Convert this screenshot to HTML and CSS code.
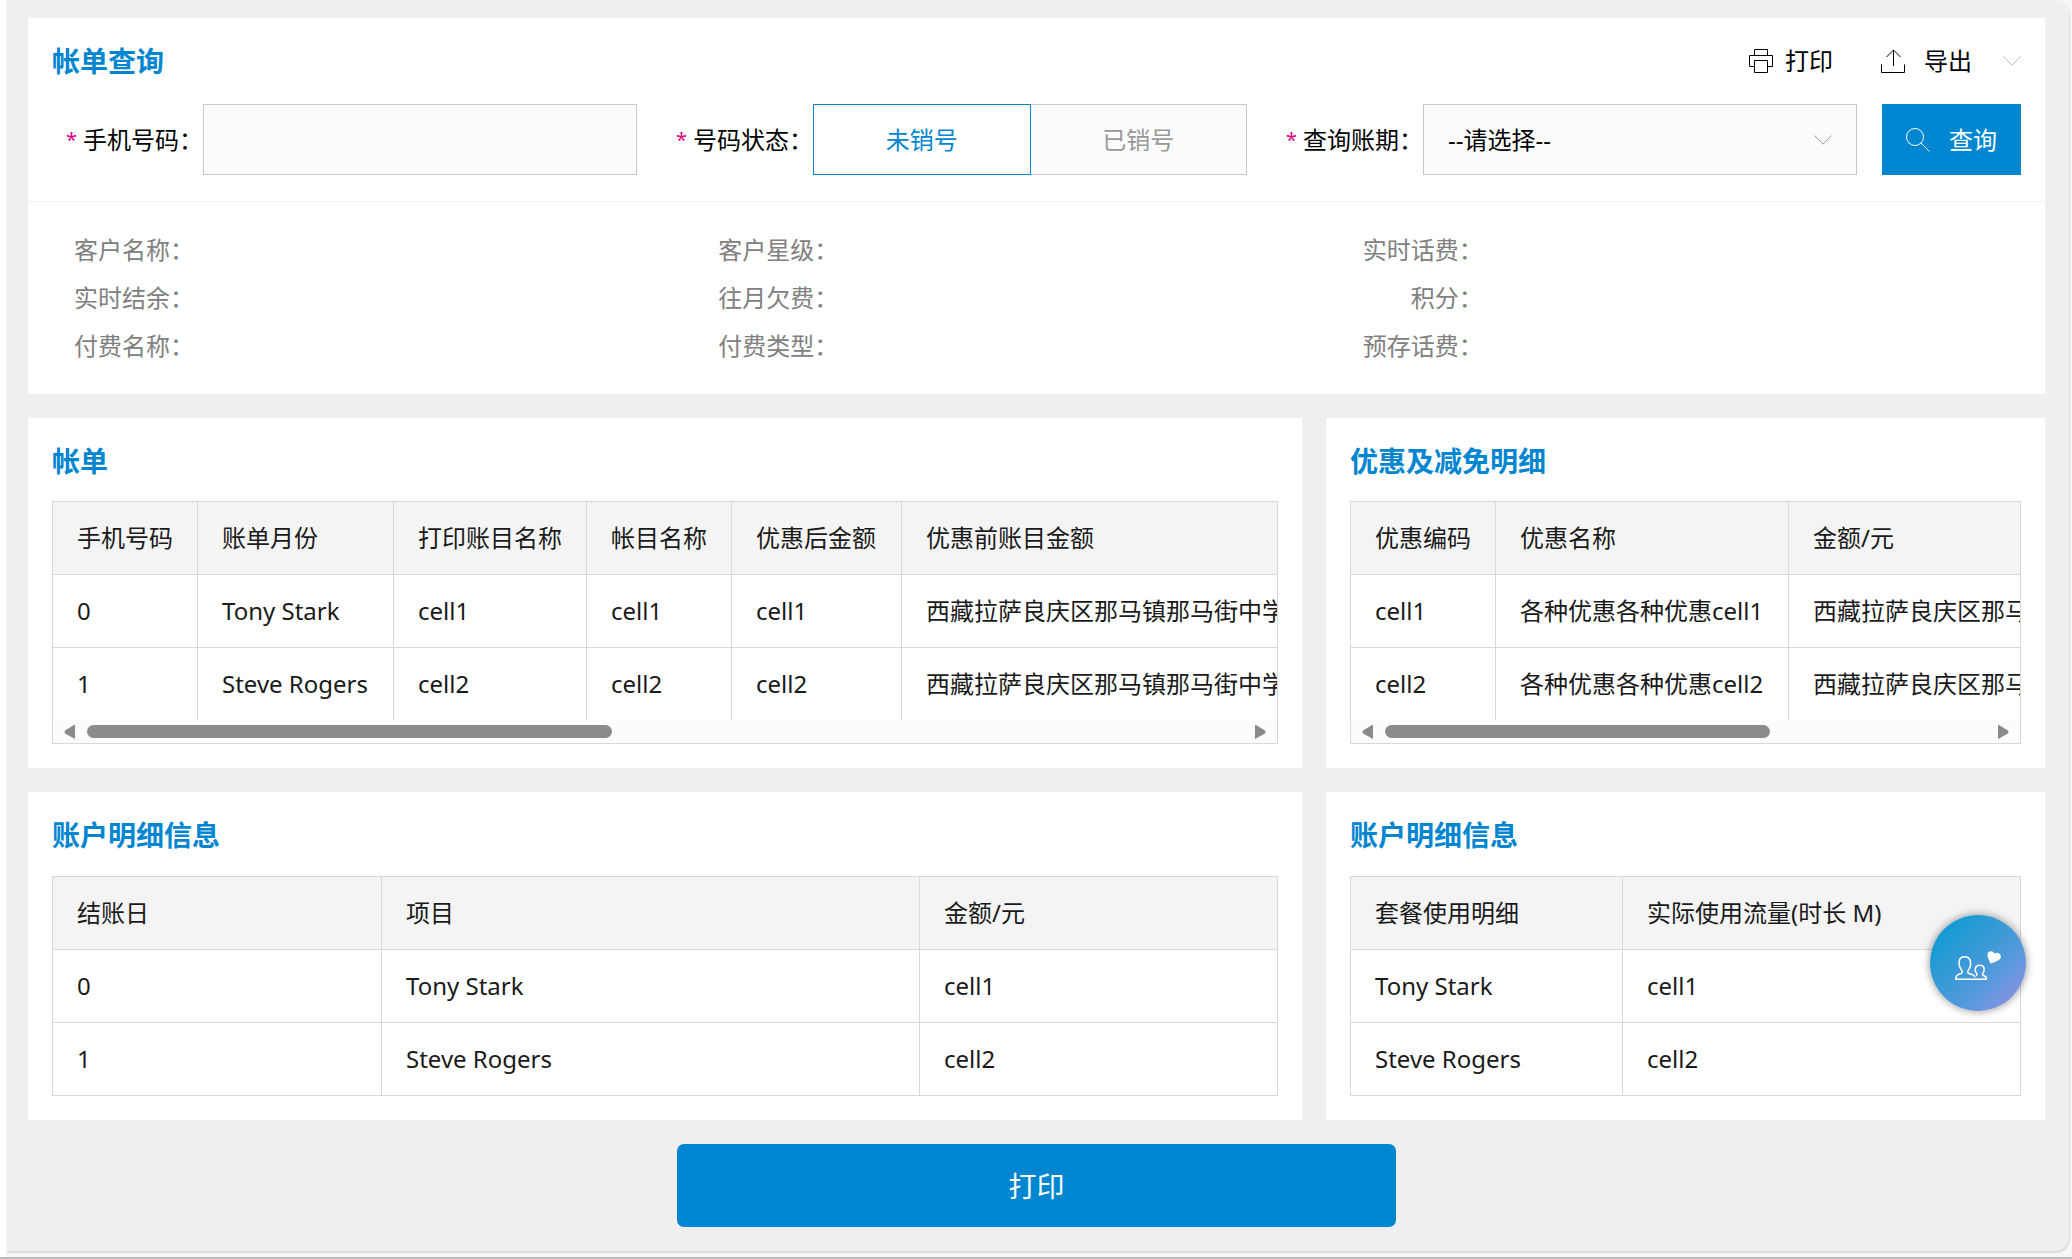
FILE: index.html
```html
<!DOCTYPE html>
<html lang="zh-CN">
<head>
<meta charset="utf-8">
<meta name="viewport" content="width=device-width, initial-scale=1">
<title>帐单查询</title>
<link rel="stylesheet" href="styles.css">
</head>
<body>
<main class="page">
  <section class="card query">
    <header class="query-head">
      <h2 class="card-title">帐单查询</h2>
      <div class="tools">
        <button type="button" class="tool tool-print">
          <svg class="icon" viewBox="0 0 24 24" aria-hidden="true"><path d="M5.500 6.500v-6h13v6M5.500 17.500h-5v-11h23v11h-5M5.500 11.500h13v12h-13z"/></svg>
          <span>打印</span>
        </button>
        <button type="button" class="tool tool-export">
          <svg class="icon" viewBox="0 0 24 24" aria-hidden="true"><path d="M.5 15.500v8h23v-8M12.500 17V1M5.500 8l7-7 7 7"/></svg>
          <span>导出</span>
        </button>
        <button type="button" class="tool tool-more" aria-label="更多">
          <svg class="chevron" viewBox="0 0 18 10" aria-hidden="true"><path d="M.5.5 9 9.200 17.500.5"/></svg>
        </button>
      </div>
    </header>
    <form class="query-form">
      <div class="field">
        <label class="field-label" for="phone"><span class="required">*</span>手机号码：</label>
        <input class="control" id="phone" type="text">
      </div>
      <div class="field" role="group" aria-labelledby="status-label">
        <span class="field-label" id="status-label"><span class="required">*</span>号码状态：</span>
        <div class="segments">
          <button type="button" class="segment segment-active" aria-pressed="true">未销号</button>
          <button type="button" class="segment" aria-pressed="false">已销号</button>
        </div>
      </div>
      <div class="field">
        <label class="field-label" for="period"><span class="required">*</span>查询账期：</label>
        <div class="select-wrap">
          <select class="control select" id="period"><option>--请选择--</option></select>
          <svg class="chevron select-arrow" viewBox="0 0 18 10" aria-hidden="true"><path d="M.5.5 9 9.200 17.500.5"/></svg>
        </div>
      </div>
      <button type="button" class="search">
        <svg class="icon" viewBox="0 0 24 24" aria-hidden="true"><circle cx="9" cy="9" r="8.500"/><path d="m15 15 8.500 8.500"/></svg>
        <span>查询</span>
      </button>
    </form>
    <dl class="info">
      <div class="info-item"><dt>客户名称：</dt><dd></dd></div>
      <div class="info-item"><dt>客户星级：</dt><dd></dd></div>
      <div class="info-item"><dt>实时话费：</dt><dd></dd></div>
      <div class="info-item"><dt>实时结余：</dt><dd></dd></div>
      <div class="info-item"><dt>往月欠费：</dt><dd></dd></div>
      <div class="info-item"><dt>积分：</dt><dd></dd></div>
      <div class="info-item"><dt>付费名称：</dt><dd></dd></div>
      <div class="info-item"><dt>付费类型：</dt><dd></dd></div>
      <div class="info-item"><dt>预存话费：</dt><dd></dd></div>
    </dl>
  </section>

  <div class="panels">
    <section class="card panel panel-scroll">
      <h2 class="card-title">帐单</h2>
      <div class="table-box">
        <div class="table-scroll">
          <table class="table table-bill">
            <colgroup><col class="col-code"><col class="col-month"><col class="col-item"><col class="col-code"><col class="col-amount"><col></colgroup>
            <thead><tr><th>手机号码</th><th>账单月份</th><th>打印账目名称</th><th>帐目名称</th><th>优惠后金额</th><th>优惠前账目金额</th></tr></thead>
            <tbody>
              <tr><td>0</td><td>Tony Stark</td><td>cell1</td><td>cell1</td><td>cell1</td><td>西藏拉萨良庆区那马镇那马街中学</td></tr>
              <tr><td>1</td><td>Steve Rogers</td><td>cell2</td><td>cell2</td><td>cell2</td><td>西藏拉萨良庆区那马镇那马街中学</td></tr>
            </tbody>
          </table>
        </div>
        <div class="scrollbar" aria-hidden="true">
          <svg class="scroll-arrow" viewBox="0 0 12 14"><path d="M11 0v14L1 8.500Q0 7 1 5.500L10 0z"/></svg>
          <div class="scroll-track"><div class="scroll-thumb thumb-bill"></div></div>
          <svg class="scroll-arrow" viewBox="0 0 12 14"><path d="M1 0v14L11 8.500Q12 7 11 5.500L2 0z"/></svg>
        </div>
      </div>
    </section>

    <section class="card panel panel-scroll">
      <h2 class="card-title">优惠及减免明细</h2>
      <div class="table-box">
        <div class="table-scroll">
          <table class="table table-discount">
            <colgroup><col class="col-code"><col class="col-name"><col></colgroup>
            <thead><tr><th>优惠编码</th><th>优惠名称</th><th>金额/元</th></tr></thead>
            <tbody>
              <tr><td>cell1</td><td>各种优惠各种优惠cell1</td><td>西藏拉萨良庆区那马镇那马街中学</td></tr>
              <tr><td>cell2</td><td>各种优惠各种优惠cell2</td><td>西藏拉萨良庆区那马镇那马街中学</td></tr>
            </tbody>
          </table>
        </div>
        <div class="scrollbar" aria-hidden="true">
          <svg class="scroll-arrow" viewBox="0 0 12 14"><path d="M11 0v14L1 8.500Q0 7 1 5.500L10 0z"/></svg>
          <div class="scroll-track"><div class="scroll-thumb thumb-discount"></div></div>
          <svg class="scroll-arrow" viewBox="0 0 12 14"><path d="M1 0v14L11 8.500Q12 7 11 5.500L2 0z"/></svg>
        </div>
      </div>
    </section>

    <section class="card panel">
      <h2 class="card-title">账户明细信息</h2>
      <div class="table-box">
        <table class="table">
          <colgroup><col class="col-day"><col class="col-project"><col></colgroup>
          <thead><tr><th>结账日</th><th>项目</th><th>金额/元</th></tr></thead>
          <tbody>
            <tr><td>0</td><td>Tony Stark</td><td>cell1</td></tr>
            <tr><td>1</td><td>Steve Rogers</td><td>cell2</td></tr>
          </tbody>
        </table>
      </div>
    </section>

    <section class="card panel">
      <h2 class="card-title">账户明细信息</h2>
      <div class="table-box">
        <table class="table">
          <colgroup><col class="col-plan"><col></colgroup>
          <thead><tr><th>套餐使用明细</th><th>实际使用流量(时长 M)</th></tr></thead>
          <tbody>
            <tr><td>Tony Stark</td><td>cell1</td></tr>
            <tr><td>Steve Rogers</td><td>cell2</td></tr>
          </tbody>
        </table>
      </div>
    </section>
  </div>

  <button type="button" class="print">打印</button>
</main>
<button type="button" class="service" aria-label="客服">
  <svg viewBox="0 0 96 96" aria-hidden="true">
    <g fill="none" stroke="#fff" stroke-width="1.500" stroke-linejoin="round">
      <path d="M46 64.200H25.700c-.2-3.400 1.300-4.700 5.300-5.700 1.600-.5 1.600-1.800.6-3.300-3.600-5-4-13.500 3-13.500s7.400 8.500 3.800 13.500c-1 1.500-1 2.800.6 3.300 3.600.9 5.400 1.800 6 3.500"/>
      <path d="M45 64.200h11.500c.2-2.400-.7-3-3.100-3.700-1.100-.3-1.200-1.200-.5-2.200 2.400-3.400 1.600-8-3.200-8s-5.600 4.600-3.200 8c.7 1 .6 1.900-.5 2.200"/>
    </g>
    <path fill="#fff" d="M60.500 48.500c-1.400-3-3.300-6.200-3-9.200.4-3.400 5-4.400 7-.9 2.700-1.700 6.200.1 6.400 3 .3 3.900-5.600 5.300-10.400 7.100z"/>
  </svg>
</button>
</body>
</html>
```
FILE: styles.css
```css
* {
  box-sizing: border-box;
}

body {
  margin: 0;
  min-height: 100vh;
  background: linear-gradient(90deg, #fff 6px, #f6f6f6 6px);
  border-bottom: 2px solid #bcbebd;
  color: #1a1a1a;
  font: 24px/36px "Noto Sans", "Noto Sans CJK SC", sans-serif;
}

button,
input,
select {
  font: inherit;
  color: inherit;
  border-radius: 0;
}

button {
  padding: 0;
  border: 0;
  background: none;
  cursor: pointer;
}

.page {
  display: flex;
  flex-direction: column;
  gap: 24px;
  margin: 0 3px 0 6px;
  padding: 18px 24px 24px 22px;
  background: #efefef;
  border-radius: 0 14px 14px 0;
  box-shadow: 1px 2px 1px #dedede;
}

.card {
  background: #fff;
}

.card-title {
  margin: 0;
  color: #0085d0;
  font-size: 28px;
  line-height: 38px;
  font-weight: 700;
}

.icon {
  width: 24px;
  height: 24px;
  fill: none;
  stroke: currentColor;
}

.chevron {
  width: 18px;
  height: 10px;
  fill: none;
  stroke: currentColor;
}

/* Query card */
.query-head {
  display: flex;
  justify-content: space-between;
  align-items: center;
  padding: 24px 24px 0;
}

.tools,
.tool {
  display: flex;
  align-items: center;
}

.tool {
  color: #000;
}

.tool-print {
  gap: 12px;
  margin-right: 48px;
}

.tool-export {
  gap: 19px;
  margin-right: 31px;
}

.tool-more {
  color: #bbb;
}

.query-form {
  display: grid;
  grid-template-columns: repeat(3, minmax(0, 1fr)) auto;
  column-gap: 25px;
  padding: 24px 24px 26px;
  border-bottom: 1px solid #efefef;
}

.field {
  display: flex;
  align-items: center;
}

.field-label {
  flex: 0 0 151px;
  display: flex;
  justify-content: flex-end;
  color: #000;
  white-space: nowrap;
}

.required {
  margin-right: 6px;
  color: #e4007f;
  font-size: 20px;
}

.control {
  flex: 1;
  width: 100%;
  min-width: 0;
  height: 71px;
  padding: 0 24px;
  border: 1px solid #c8c8c8;
  background: #fcfcfc;
}

.segments {
  flex: 1;
  display: flex;
  height: 71px;
}

.segment {
  flex: 1;
  border: 1px solid #c8c8c8;
  border-left: 0;
  background: #fcfcfc;
  color: #999;
}

.segment-active {
  border: 1px solid #0085d0;
  background: #fff;
  color: #0085d0;
}

.select-wrap {
  flex: 1;
  position: relative;
}

.select {
  appearance: none;
  display: block;
  color: #000;
}

.select-arrow {
  position: absolute;
  top: 31px;
  right: 25px;
  color: #999;
  pointer-events: none;
}

.search {
  display: flex;
  align-items: center;
  gap: 19px;
  padding: 0 24px;
  background: #0085d0;
  color: #fff;
}

.info {
  display: grid;
  grid-template-columns: repeat(3, minmax(0, 1fr));
  margin: 0;
  padding: 24px 42px;
  color: #808080;
  line-height: 48px;
}

.info-item {
  display: flex;
}

.info dt {
  width: 124px;
  text-align: right;
}

.info dd {
  margin: 0;
}

/* Table panels */
.panels {
  display: grid;
  grid-template-columns: minmax(0, 1274fr) minmax(0, 719fr);
  gap: 24px;
}

.panel {
  padding: 24px;
}

.panel .card-title {
  margin-bottom: 22px;
}

.panel-scroll .card-title {
  margin-bottom: 21px;
}

.table-box {
  border: 1px solid #d8d8d8;
}

.table-scroll {
  overflow-x: auto;
  scrollbar-width: none;
}

.table {
  width: 100%;
  table-layout: fixed;
  border-collapse: separate;
  border-spacing: 0;
}

.table-bill {
  width: 220%;
}

.table-discount {
  width: 156%;
}

.table th,
.table td {
  height: 73px;
  padding: 0 0 0 24px;
  border-right: 1px solid #d8d8d8;
  border-bottom: 1px solid #d8d8d8;
  text-align: left;
  font-weight: 400;
  white-space: nowrap;
}

.table th {
  background: #f4f4f4;
}

.table th:last-child,
.table td:last-child {
  border-right: 0;
}

.table tr:last-child td {
  height: 72px;
  border-bottom: 0;
}

.col-code {
  width: 145px;
}

.col-month {
  width: 196px;
}

.col-item {
  width: 193px;
}

.col-amount {
  width: 170px;
}

.col-name {
  width: 293px;
}

.col-day {
  width: 329px;
}

.col-project {
  width: 538px;
}

.col-plan {
  width: 272px;
}

.scrollbar {
  display: flex;
  align-items: center;
  gap: 11px;
  height: 23px;
  padding: 0 11px;
  background: #fcfcfc;
}

.scroll-arrow {
  width: 12px;
  height: 14px;
  fill: #8b8b8b;
}

.scroll-track {
  flex: 1;
}

.scroll-thumb {
  height: 13px;
  border-radius: 7px;
  background: #8b8b8b;
}

.thumb-bill {
  width: 45.4%;
}

.thumb-discount {
  width: 64%;
}

.print {
  align-self: center;
  width: 100%;
  max-width: 719px;
  height: 83px;
  border-radius: 7px;
  background: #0085d0;
  color: #fff;
  font-size: 28px;
}

.service {
  position: fixed;
  right: 46px;
  bottom: 248px;
  width: 96px;
  height: 96px;
  border-radius: 50%;
  background: linear-gradient(135deg, #0d9bd0 10%, #5699dc 65%, #8b92e2 90%);
  box-shadow: 0 0 8px rgba(0, 0, 0, 0.45);
}

.service svg {
  display: block;
}
```
